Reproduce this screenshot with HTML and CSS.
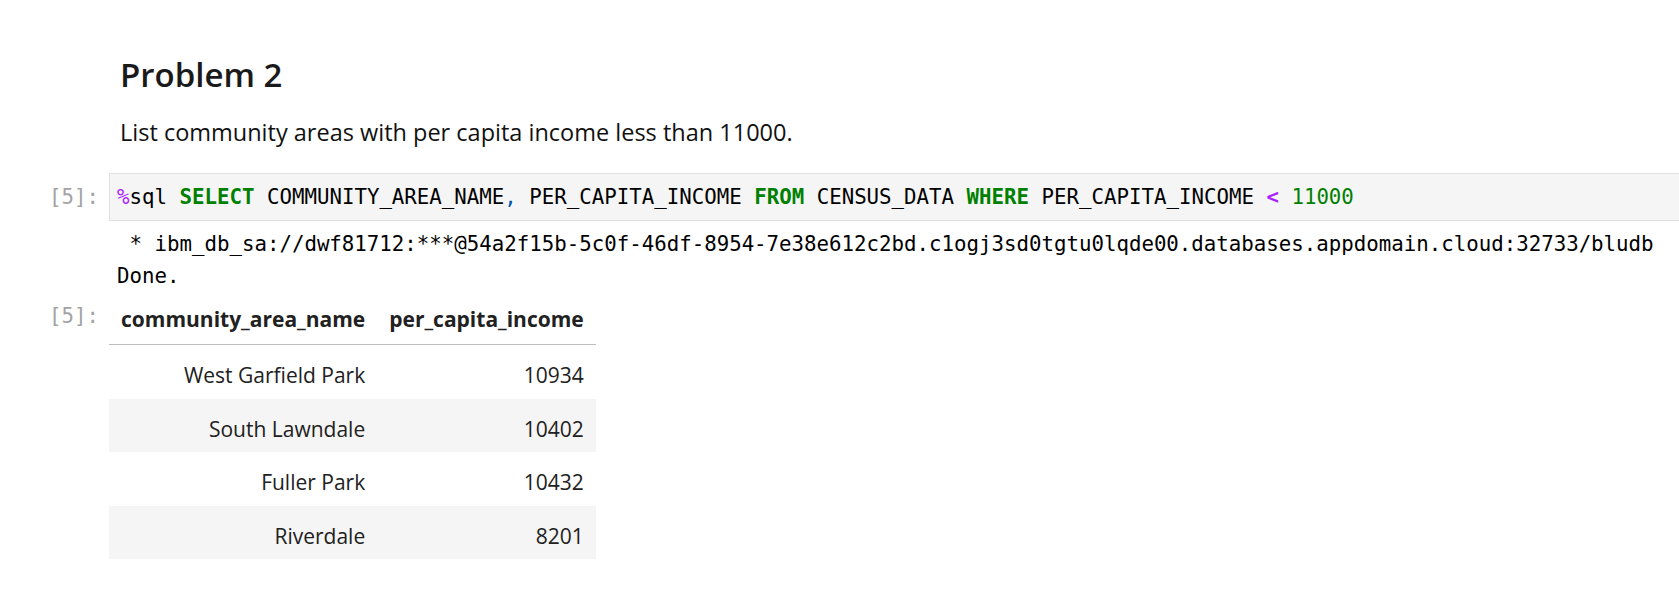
FILE: index.html
```html
<!DOCTYPE html>
<html>
<head>
<meta charset="utf-8">
<link rel="stylesheet" href="styles.css">
</head>
<body>
<div class="notebook">
  <div class="cell md-cell">
    <div class="prompt"></div>
    <div class="md-body">
      <h2 class="md-h2">Problem 2</h2>
      <p class="md-p">List community areas with per capita income less than 11000.</p>
    </div>
  </div>
  <div class="cell code-cell">
    <div class="row input-row">
      <div class="prompt in-prompt">[5]:</div>
      <div class="editor"><pre class="code"><span class="tok-magic">%</span>sql <span class="tok-kw">SELECT</span> COMMUNITY_AREA_NAME<span class="tok-punct">,</span> PER_CAPITA_INCOME <span class="tok-kw">FROM</span> CENSUS_DATA <span class="tok-kw">WHERE</span> PER_CAPITA_INCOME <span class="tok-op">&lt;</span> <span class="tok-num">11000</span></pre></div>
    </div>
    <div class="row output-row">
      <div class="prompt"></div>
      <pre class="stream"> * ibm_db_sa://dwf81712:***@54a2f15b-5c0f-46df-8954-7e38e612c2bd.c1ogj3sd0tgtu0lqde00.databases.appdomain.cloud:32733/bludb
Done.</pre>
    </div>
    <div class="row output-row">
      <div class="prompt out-prompt">[5]:</div>
      <table class="df">
        <thead>
          <tr><th>community_area_name</th><th>per_capita_income</th></tr>
        </thead>
        <tbody>
          <tr><td>West Garfield Park</td><td>10934</td></tr>
          <tr><td>South Lawndale</td><td>10402</td></tr>
          <tr><td>Fuller Park</td><td>10432</td></tr>
          <tr><td>Riverdale</td><td>8201</td></tr>
        </tbody>
      </table>
    </div>
  </div>
</div>
</body>
</html>
```
FILE: styles.css
```css
html, body {
  margin: 0;
  padding: 0;
  background: #ffffff;
  overflow: hidden;
}
body {
  font-family: "Open Sans", "Noto Sans", sans-serif;
  color: #212121;
}
.notebook {
  padding-top: 53px;
  width: 1700px;
}
.cell {
  display: flex;
  flex-direction: column;
}
.md-cell {
  flex-direction: row;
}
.row {
  display: flex;
  flex-direction: row;
  align-items: flex-start;
}
.prompt {
  flex: 0 0 99px;
  width: 99px;
  padding-right: 10px;
  text-align: right;
  font-family: "DejaVu Sans Mono", monospace;
  font-size: 20.76px;
  line-height: 30px;
  color: #a3a3a3;
}
.md-body {
  padding-left: 11px;
}
.md-h2 {
  margin: 0;
  font-size: 33px;
  font-weight: 600;
  line-height: 44px;
  color: #1a1a1a;
}
.md-p {
  margin: 18px 0 0 0;
  font-size: 23.5px;
  line-height: 34px;
  color: #111111;
}
.code-cell {
  margin-top: 24px;
}
.in-prompt {
  padding-top: 9px;
}
.editor {
  flex: 1;
  background: #f5f5f5;
  border: 1px solid #e0e0e0;
  padding: 8px 7px;
}
.code, .stream {
  margin: 0;
  font-family: "DejaVu Sans Mono", monospace;
  font-size: 20.76px;
  line-height: 30px;
  color: #000000;
  white-space: pre;
}
.tok-magic { color: #aa22ff; }
.tok-kw { color: #008000; font-weight: bold; }
.tok-punct { color: #0055aa; }
.tok-op { color: #aa22ff; font-weight: bold; }
.tok-num { color: #008000; }
.stream {
  margin-top: 7px;
  padding-left: 8px;
  line-height: 32px;
}
.out-prompt {
  padding-top: 9px;
}
.df {
  border-collapse: collapse;
  font-size: 21px;
  line-height: 30px;
  color: #212121;
}
.df th, .df td {
  text-align: right;
  padding: 15px 12px 8.5px 12px;
  white-space: nowrap;
}
.df th {
  font-weight: 700;
  padding-top: 12px;
  padding-bottom: 10px;
  border-bottom: 1px solid #bdbdbd;
}
.df tbody tr:nth-child(even) {
  background: #f5f5f5;
}
```
